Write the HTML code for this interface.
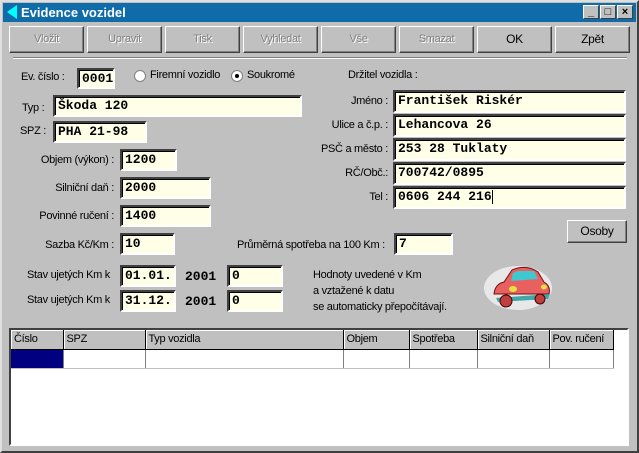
<!DOCTYPE html>
<html><head><meta charset="utf-8"><style>
*{box-sizing:border-box;margin:0;padding:0}
body{width:639px;height:453px;overflow:hidden;background:#c0c0c0;font-family:"Liberation Sans",sans-serif;font-size:11px;color:#000;position:relative}
.win{position:absolute;left:0;top:0;width:639px;height:453px;border:2px solid;border-color:#dfdfdf #404040 #404040 #dfdfdf}
.a{position:absolute;white-space:nowrap}
.tb{left:3px;top:3px;width:633px;height:19px;background:#106ca8;color:#fff;font-weight:bold;font-size:13px;line-height:19px}
.btn{position:absolute;top:26px;width:75px;height:27px;background:#c0c0c0;border:1px solid;border-color:#fff #404040 #404040 #fff;box-shadow:inset -1px -1px 0 #808080;text-align:center;line-height:25px;font-size:11px;color:#808080;text-shadow:1px 1px 0 #fff;letter-spacing:-0.3px}
.btn.on{color:#000;text-shadow:none;font-size:12px}
.in{position:absolute;background:#ffffe8;border:2px solid;border-color:#404040 #fff #fff #404040;box-shadow:inset 1px 1px 0 #000;font-family:"Liberation Mono",monospace;font-weight:bold;font-size:13px;line-height:18px;padding-left:3px}
.l{position:absolute;white-space:nowrap;font-size:11px;letter-spacing:-0.3px}
.r{text-align:right}
.ws{position:absolute;top:2px;width:16px;height:14px;background:#c0c0c0;border:1px solid;border-color:#fff #404040 #404040 #fff;color:#000;font-size:11px;line-height:12px;text-align:center;font-weight:bold}
.rad{position:absolute;width:12px;height:12px;border-radius:50%;background:#fff;border:1px solid #808080}
th,td{border-right:1px solid #808080;font-weight:normal;text-align:left;padding-left:3px;font-size:11px;letter-spacing:-0.3px;white-space:nowrap;overflow:hidden}
th{height:19px;border-bottom:1px solid #000;background:#c0c0c0;border-right:1px solid #000;box-shadow:inset 1px 1px 0 #fff}
td{height:19px;border-bottom:1px solid #c0c0c0}
</style></head><body>
<div class="win"></div>
<div class="a tb"><span style="display:inline-block;width:0;height:0;border-top:7px solid transparent;border-bottom:7px solid transparent;border-right:10px solid #0ff;margin:2px 4px 0 4px;vertical-align:top"></span>Evidence vozidel
<div class="ws" style="left:580px">_</div><div class="ws" style="left:597px">□</div><div class="ws" style="left:614px">×</div></div>
<div class="btn" style="left:9px">Vložit</div>
<div class="btn" style="left:87px">Upravit</div>
<div class="btn" style="left:165px">Tisk</div>
<div class="btn" style="left:243px">Vyhledat</div>
<div class="btn" style="left:321px">Vše</div>
<div class="btn" style="left:399px">Smazat</div>
<div class="btn on" style="left:477px">OK</div>
<div class="btn on" style="left:555px">Zpět</div>
<div class="a" style="left:13px;top:57px;width:614px;height:2px;border-top:1px solid #808080;border-bottom:1px solid #fff"></div>

<div class="l" style="left:21px;top:71px">Ev. číslo :</div>
<div class="in" style="left:77px;top:68px;width:38px;height:21px">0001</div>
<div class="rad" style="left:134px;top:70px"></div><div class="l" style="left:150px;top:69px">Firemní vozidlo</div>
<div class="rad" style="left:231px;top:70px"><div style="position:absolute;left:3px;top:3px;width:4px;height:4px;background:#000;border-radius:50%"></div></div><div class="l" style="left:247px;top:69px">Soukromé</div>
<div class="l" style="left:22px;top:102px">Typ :</div>
<div class="in" style="left:53px;top:95px;width:249px;height:22px">Škoda 120</div>
<div class="l" style="left:20px;top:125px">SPZ :</div>
<div class="in" style="left:53px;top:121px;width:94px;height:22px">PHA 21-98</div>

<div class="l r" style="left:0;width:114px;top:154px">Objem (výkon) :</div>
<div class="in" style="left:120px;top:149px;width:57px;height:22px">1200</div>
<div class="l r" style="left:0;width:114px;top:182px">Silniční daň :</div>
<div class="in" style="left:120px;top:177px;width:91px;height:22px">2000</div>
<div class="l r" style="left:0;width:114px;top:210px">Povinné ručení :</div>
<div class="in" style="left:120px;top:205px;width:91px;height:22px">1400</div>
<div class="l r" style="left:0;width:114px;top:239px">Sazba Kč/Km :</div>
<div class="in" style="left:120px;top:233px;width:55px;height:22px">10</div>
<div class="l" style="left:27px;top:269px">Stav ujetých Km k</div>
<div class="in" style="left:120px;top:265px;width:56px;height:22px">01.01.</div>
<div class="a" style="left:185px;top:269px;font-family:'Liberation Mono',monospace;font-weight:bold;font-size:13px">2001</div>
<div class="in" style="left:227px;top:265px;width:56px;height:22px">0</div>
<div class="l" style="left:27px;top:294px">Stav ujetých Km k</div>
<div class="in" style="left:120px;top:290px;width:56px;height:22px">31.12.</div>
<div class="a" style="left:185px;top:294px;font-family:'Liberation Mono',monospace;font-weight:bold;font-size:13px">2001</div>
<div class="in" style="left:227px;top:290px;width:56px;height:22px">0</div>

<div class="l" style="left:348px;top:69px">Držitel vozidla :</div>
<div class="l r" style="left:280px;width:108px;top:95px">Jméno :</div>
<div class="in" style="left:393px;top:90px;width:233px;height:23px">František Riskér</div>
<div class="l r" style="left:280px;width:108px;top:119px">Ulice a č.p. :</div>
<div class="in" style="left:393px;top:114px;width:233px;height:23px">Lehancova 26</div>
<div class="l r" style="left:280px;width:108px;top:143px">PSČ a město :</div>
<div class="in" style="left:393px;top:138px;width:233px;height:23px">253 28 Tuklaty</div>
<div class="l r" style="left:280px;width:108px;top:167px">RČ/Obč.:</div>
<div class="in" style="left:393px;top:162px;width:233px;height:23px">700742/0895</div>
<div class="l r" style="left:280px;width:108px;top:191px">Tel :</div>
<div class="in" style="left:393px;top:186px;width:233px;height:23px">0606 244 216<span style="display:inline-block;width:1px;height:14px;background:#000;vertical-align:middle"></span></div>
<div class="btn on" style="left:567px;top:220px;width:60px;height:23px;line-height:21px">Osoby</div>
<div class="l" style="left:237px;top:239px">Průměrná spotřeba na 100 Km :</div>
<div class="in" style="left:394px;top:233px;width:59px;height:22px">7</div>
<div class="l" style="left:313px;top:267px;line-height:16px">Hodnoty uvedené v Km<br>a vztažené k datu<br>se automaticky přepočítávají.</div>

<svg class="a" style="left:482px;top:258px" width="72" height="56" viewBox="0 0 72 56">
<ellipse cx="36" cy="30" rx="34" ry="22" fill="#e8e8e8"/>
<path d="M12 36 Q13 26 22 24 L30 12 Q44 6 56 14 L62 24 Q69 28 67 36 Z" fill="#e86060" stroke="#701010" stroke-width="1"/>
<path d="M31 15 L36 13 L52 13 L56 21 L29 23 Z" fill="#40c8d0"/>
<path d="M14 40 L68 36 L66 41 L16 44 Z" fill="#40a8a8"/>
<circle cx="24" cy="43" r="6" fill="#c04040" stroke="#400"/><circle cx="58" cy="41" r="5" fill="#c04040" stroke="#400"/>
<ellipse cx="31" cy="31" rx="4" ry="3" fill="#e8e040"/><ellipse cx="62" cy="29" rx="3" ry="2.5" fill="#e8e040"/>
</svg>

<div class="a" style="left:9px;top:328px;width:620px;height:118px;background:#fff;border:2px solid;border-color:#404040 #fff #fff #404040"></div>
<table class="a" style="left:11px;top:330px;border-collapse:collapse;table-layout:fixed">
<colgroup><col width="52"><col width="82"><col width="198"><col width="66"><col width="68"><col width="72"><col width="64"></colgroup>
<tr><th>Číslo</th><th>SPZ</th><th>Typ vozidla</th><th>Objem</th><th>Spotřeba</th><th>Silniční daň</th><th>Pov. ručení</th></tr>
<tr><td style="background:#000080"></td><td></td><td></td><td></td><td></td><td></td><td></td></tr>
</table>
</body></html>
